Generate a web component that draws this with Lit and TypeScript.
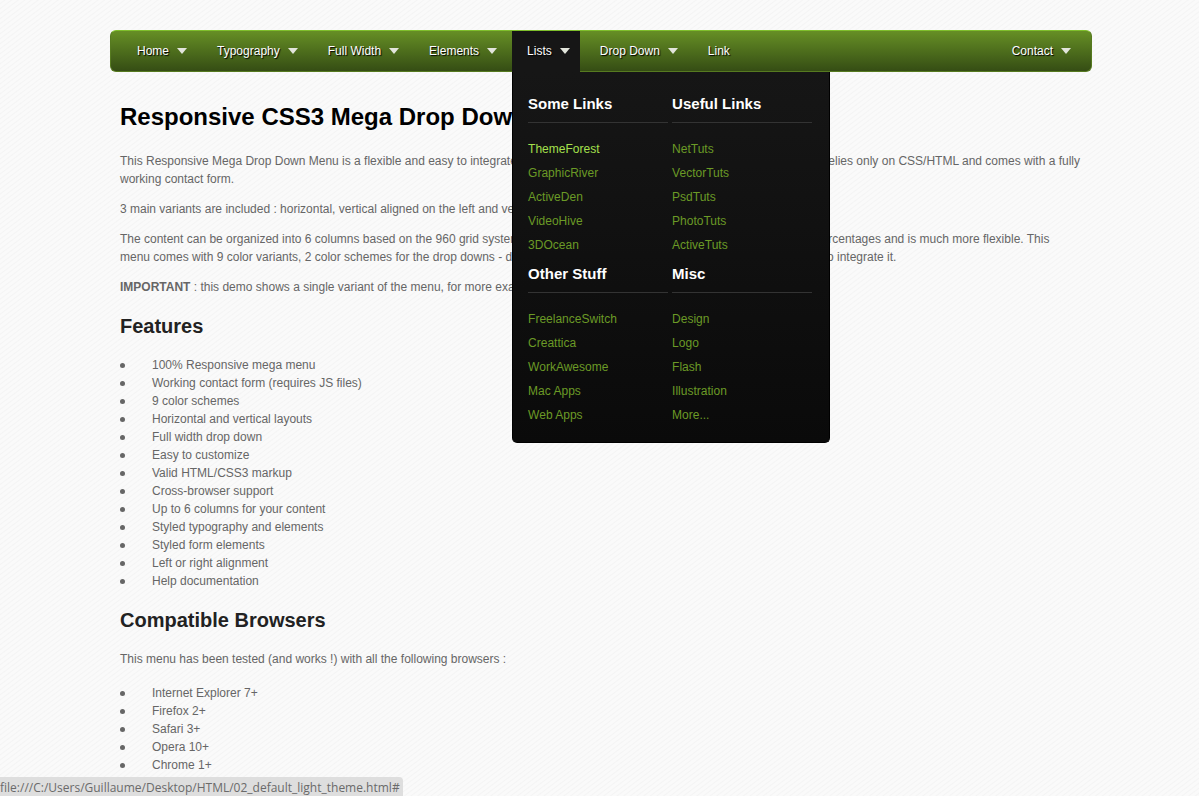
import { LitElement, html, css, nothing } from "lit";
import { customElement, property } from "lit/decorators.js";

interface MenuItem {
  label: string;
  drop: boolean;
  open?: boolean;
  end?: boolean;
}

interface LinkGroup {
  title: string;
  links: string[];
}

const MENU: MenuItem[] = [
  { label: "Home", drop: true },
  { label: "Typography", drop: true },
  { label: "Full Width", drop: true },
  { label: "Elements", drop: true },
  { label: "Lists", drop: true, open: true },
  { label: "Drop Down", drop: true },
  { label: "Link", drop: false },
  { label: "Contact", drop: true, end: true },
];

const GROUPS: LinkGroup[] = [
  { title: "Some Links", links: ["ThemeForest", "GraphicRiver", "ActiveDen", "VideoHive", "3DOcean"] },
  { title: "Useful Links", links: ["NetTuts", "VectorTuts", "PsdTuts", "PhotoTuts", "ActiveTuts"] },
  { title: "Other Stuff", links: ["FreelanceSwitch", "Creattica", "WorkAwesome", "Mac Apps", "Web Apps"] },
  { title: "Misc", links: ["Design", "Logo", "Flash", "Illustration", "More..."] },
];

const FEATURES = [
  "100% Responsive mega menu",
  "Working contact form (requires JS files)",
  "9 color schemes",
  "Horizontal and vertical layouts",
  "Full width drop down",
  "Easy to customize",
  "Valid HTML/CSS3 markup",
  "Cross-browser support",
  "Up to 6 columns for your content",
  "Styled typography and elements",
  "Styled form elements",
  "Left or right alignment",
  "Help documentation",
];

const BROWSERS = ["Internet Explorer 7+", "Firefox 2+", "Safari 3+", "Opera 10+", "Chrome 1+"];

@customElement("mega-panel")
export class MegaPanel extends LitElement {
  @property({ attribute: false }) groups: LinkGroup[] = [];
  @property() current = "";

  static styles = css`
    :host {
      display: grid;
      box-sizing: border-box;
      width: 318px;
      grid-template-columns: 1fr 1fr;
      column-gap: 4px;
      padding: 15px 17px 15px 15px;
      border: 1px solid #000;
      border-top: 0;
      border-radius: 0 0 5px 5px;
      background: linear-gradient(#161616, #0a0a0a);
    }
    .title {
      margin: 0 0 14px;
      padding: 8px 0 9px;
      border-bottom: 1px solid #333;
      color: #fff;
      font-size: 15px;
      line-height: 18px;
      font-weight: bold;
    }
    .links {
      margin: 0;
      padding: 0;
      list-style: none;
    }
    .link {
      display: block;
      color: #6b9a26;
      font-size: 12px;
      line-height: 24px;
      text-decoration: none;
    }
    .link:hover,
    .current {
      color: #a5e04c;
    }
  `;

  render() {
    return this.groups.map(
      (g) => html`<section>
        <h3 class="title">${g.title}</h3>
        <ul class="links">
          ${g.links.map(
            (l) => html`<li><a class="link ${l === this.current ? "current" : ""}" href="#">${l}</a></li>`
          )}
        </ul>
      </section>`
    );
  }
}

@customElement("mega-menu")
export class MegaMenu extends LitElement {
  @property({ attribute: false }) items: MenuItem[] = [];

  static styles = css`
    :host {
      display: block;
    }
    .bar {
      display: flex;
      gap: 5px;
      margin: 0;
      padding: 0 10px 0 11px;
      list-style: none;
      border: 1px solid #567a20;
      border-top-color: #7fbf2c;
      border-radius: 6px;
      background: linear-gradient(#668f25, #354d14);
    }
    .item {
      position: relative;
    }
    .end {
      margin-left: auto;
    }
    .label {
      display: flex;
      align-items: center;
      gap: 8px;
      height: 40px;
      padding: 0 10px 0 15px;
      color: #fff;
      font-size: 12px;
      text-decoration: none;
      text-shadow: 1px 1px 1px #000;
    }
    .open {
      background: #161616;
      box-shadow: 0 1px #161616;
    }
    .arrow {
      width: 10px;
      height: 6px;
    }
    .panel {
      position: absolute;
      z-index: 2;
      top: 100%;
      left: 0;
      margin-top: 1px;
    }
  `;

  render() {
    return html`<nav>
      <ul class="bar">
        ${this.items.map(
          (i) => html`<li class="item ${i.end ? "end" : ""}">
            <a class="label ${i.open ? "open" : ""}" href="#"
              >${i.label}${i.drop
                ? html`<svg class="arrow" viewBox="0 0 10 6" aria-hidden="true">
                    <path d="M0 0H10L5 6Z" fill="#e2e5dc" />
                  </svg>`
                : nothing}</a
            >
            ${i.open
              ? html`<mega-panel class="panel" .groups=${GROUPS} current="ThemeForest"></mega-panel>`
              : nothing}
          </li>`
        )}
      </ul>
    </nav>`;
  }
}

@customElement("app-root")
export class AppRoot extends LitElement {
  static styles = css`
    :host {
      display: block;
      box-sizing: border-box;
      min-height: 100vh;
      padding: 30px 107px 21px 110px;
      color: #666;
      font: 12px/18px "Liberation Sans", Arial, sans-serif;
      background: repeating-linear-gradient(143deg, #fafafa 0 2px, #f4f4f4 3px, #fafafa 4px);
    }
    .content {
      padding: 0 10px;
    }
    .h1 {
      margin: 30px 0 20px;
      color: #000;
      font-size: 24px;
      line-height: 30px;
    }
    .h2 {
      margin: 18px 0;
      color: #222;
      font-size: 20px;
      line-height: 24px;
    }
    .text {
      margin: 0 0 12px;
    }
    .list {
      margin: 16px 0 18px;
      padding: 0;
      list-style: none;
    }
    .list li {
      display: flex;
      align-items: center;
      gap: 27px;
    }
    .list li::before {
      content: "";
      width: 5px;
      height: 5px;
      border-radius: 50%;
      background: #666;
    }
    .status {
      position: fixed;
      bottom: 0;
      left: 0;
      padding: 2px 3px 0 0;
      border-radius: 0 4px 0 0;
      background: #dedede;
      color: #6a6a6a;
      font-family: "Open Sans", "Noto Sans", sans-serif;
      line-height: 17px;
    }
  `;

  private list(items: string[]) {
    return html`<ul class="list">
      ${items.map((t) => html`<li>${t}</li>`)}
    </ul>`;
  }

  render() {
    return html`
      <mega-menu .items=${MENU}></mega-menu>
      <main class="content">
        <h1 class="h1">Responsive CSS3 Mega Drop Down Menu</h1>
        <p class="text">
          This Responsive Mega Drop Down Menu is a flexible and easy to integrate solution to build custom menus for
          all of your websites. It relies only on CSS/HTML and comes with a fully working contact form.
        </p>
        <p class="text">
          3 main variants are included : horizontal, vertical aligned on the left and vertical on the right.
        </p>
        <p class="text">
          The content can be organized into 6 columns based on the 960 grid system. The width of each menu column is
          now fully based on percentages and is much more flexible. This menu comes with 9 color variants, 2 color
          schemes for the drop downs - dark and light - and it is also very simple to set up and easy to integrate it.
        </p>
        <p class="text">
          <strong>IMPORTANT</strong> : this demo shows a single variant of the menu, for more examples see the files.
        </p>
        <h2 class="h2">Features</h2>
        ${this.list(FEATURES)}
        <h2 class="h2">Compatible Browsers</h2>
        <p class="text">This menu has been tested (and works !) with all the following browsers :</p>
        ${this.list(BROWSERS)}
      </main>
      <div class="status" role="status">file:///C:/Users/Guillaume/Desktop/HTML/02_default_light_theme.html#</div>
    `;
  }
}
